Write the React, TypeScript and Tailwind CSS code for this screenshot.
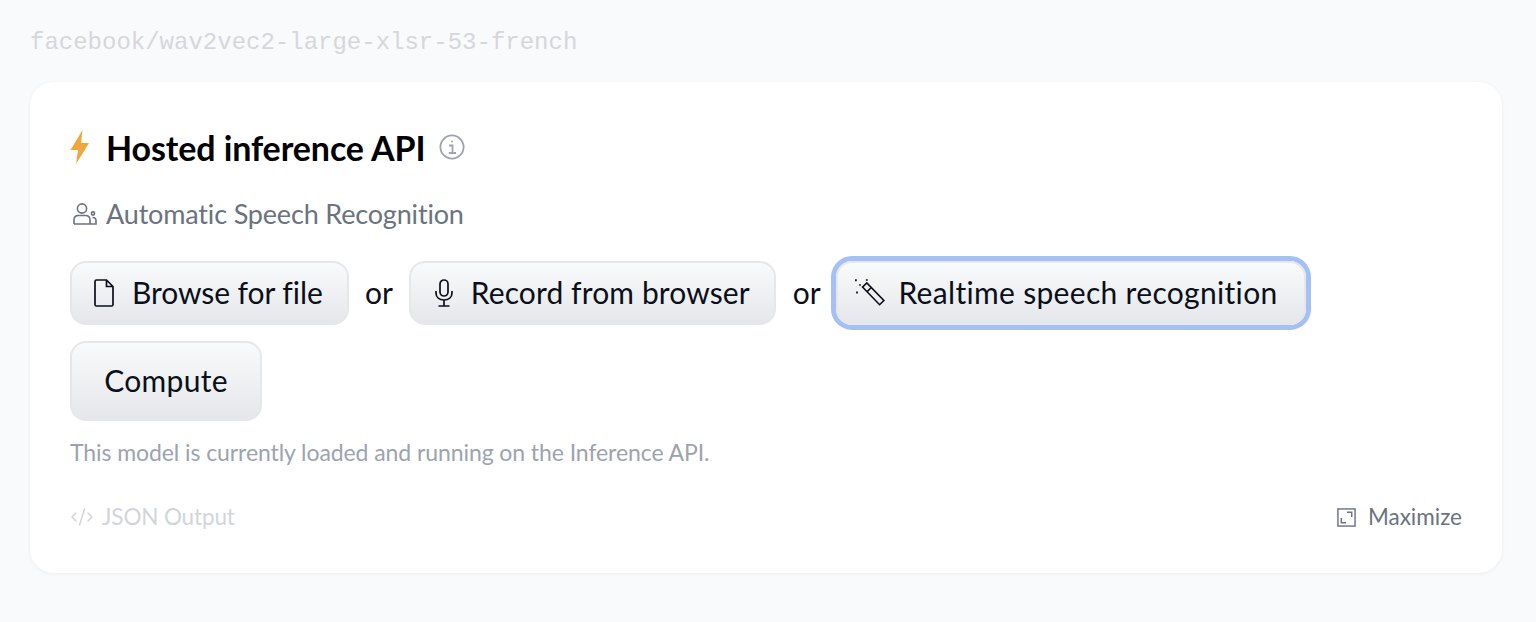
import { Code2 } from "lucide-react";

const buttonClass =
  "flex h-[64px] items-center rounded-[16px] border-2 border-[#e5e7eb] bg-gradient-to-b from-[#f9fafb] to-[#e5e7eb] pb-[2px] text-[30px] text-[#0b0f19]";

const App = () => {
  return (
    <div className="min-h-[622px] bg-[#f9fafb] pl-[30px] pr-[34px] pt-[25px] font-['Lato','Noto_Sans',sans-serif]">
      <h1 className="mb-[22px] h-[35px] font-['Liberation_Mono',monospace] text-[24px] leading-[35px] text-[#d5d7dd]">
        facebook/wav2vec2-large-xlsr-53-french
      </h1>
      <div className="flex h-[491px] flex-col rounded-[24px] bg-white px-[40px] pt-[44px] shadow-[0_1px_4px_rgba(0,0,0,0.06)]">
        <div className="flex h-[42px] items-center">
          <svg className="mr-[16px] h-[34px] w-[20px]" viewBox="0 0 20 34">
            <path d="M12.5 0 L0.5 20 H8 L6 34 L19 13 H11 Z" fill="#f0a63c" />
          </svg>
          <span className="text-[34px] font-bold tracking-[-0.1px] text-black">Hosted inference API</span>
          <svg className="ml-[14px] h-[26px] w-[26px]" viewBox="0 0 26 26" fill="none" stroke="#9ca3af" strokeWidth="1.8">
            <circle cx="13" cy="13" r="11.6" />
            <path d="M10 11.5 H13.5 V19 M9.8 19 H17" />
            <circle cx="13" cy="7.6" r="1" fill="#9ca3af" stroke="none" />
          </svg>
        </div>
        <div className="mt-[25px] flex h-[42px] items-center text-[#6b7280]">
          <svg className="ml-[3px] mr-[9px] h-[24px] w-[24px]" viewBox="0 0 24 24" fill="none" stroke="#6b7280" strokeWidth="1.6">
            <circle cx="9" cy="6.5" r="4.6" />
            <path d="M1 22 V18 C1 15 3 13.5 5.5 13.5 H12.5 C15 13.5 17 15 17 18 V22 H23 V18.5 C23 16.5 21.5 15.5 19.5 15.5 M1 22 H17" />
            <circle cx="20" cy="11.5" r="1.6" />
          </svg>
          <span className="text-[27px] tracking-[-0.17px]">Automatic Speech Recognition</span>
        </div>
        <div className="mt-[26px] flex h-[64px] items-center text-[30px] text-[#0b0f19]">
          <button className={`${buttonClass} w-[279px] pl-[22px] tracking-[-0.07px]`}>
            <svg className="mr-[18px] mt-[2px] h-[28px] w-[20px] shrink-0" viewBox="0 0 20 28" fill="none" stroke="currentColor" strokeWidth="1.7">
              <path d="M2.5 1 H12.5 L19 7.5 V25.5 Q19 27 17.5 27 H2.5 Q1 27 1 25.5 V2.5 Q1 1 2.5 1 Z M12.5 1 V7.5 H19" />
            </svg>
            Browse for file
          </button>
          <span className="mb-[2px] ml-[16px] mr-[16px] tracking-[-0.1px]">or</span>
          <button className={`${buttonClass} w-[367px] pl-[20px] tracking-[0.12px]`}>
            <svg className="mr-[14px] mt-[2px] h-[28px] w-[26px] shrink-0" viewBox="0 0 26 28" fill="none" stroke="currentColor" strokeWidth="1.7">
              <rect x="9" y="1" width="8" height="16" rx="4" />
              <path d="M5 12 V14 C5 18.5 8.5 21 13 21 C17.5 21 21 18.5 21 14 V12 M13 21 V27 M7.5 27 H18.5" />
            </svg>
            Record from browser
          </button>
          <span className="mb-[2px] ml-[17px] mr-[11px] tracking-[-0.1px]">or</span>
          <div className="rounded-[21px] border-[5px] border-[#a5c0f5]">
            <button className={`${buttonClass} w-[470px] pl-[16px] tracking-[0.32px]`}>
              <svg className="mr-[12px] mt-[2px] h-[32px] w-[32px] shrink-0" viewBox="0 0 30 30" fill="none" stroke="currentColor" strokeWidth="1.5">
                <path d="M8 9.5 L12 5.5 L28 22 L24 26 Z M12 14 L16.3 9.8" />
                <path d="M1 3 h1.6 M12 2 v1.6 M2 14.5 h1.6 M5 7.5 h1.2" strokeWidth="1.8" />
              </svg>
              Realtime speech recognition
            </button>
          </div>
        </div>
        <button className={`${buttonClass} mt-[16px] h-[80px] w-[192px] justify-center tracking-[0.3px]`}>Compute</button>
        <p className="mt-[16px] h-[30px] text-[23px] leading-[30px] tracking-[-0.08px] text-[#9ca3af]">
          This model is currently loaded and running on the Inference API.
        </p>
        <div className="mt-[35px] flex h-[30px] items-center justify-between text-[22.5px]">
          <div className="flex items-center text-[#d1d5db]">
            <Code2 size={24} strokeWidth={1.5} className="mr-[8px]" />
            <span className="tracking-[-0.15px]">JSON Output</span>
          </div>
          <div className="flex items-center text-[#6b7280]">
            <svg className="mr-[12px] h-[19px] w-[19px]" viewBox="0 0 20 20" fill="none" stroke="currentColor" strokeWidth="1.5">
              <rect x="1" y="1" width="18" height="18" />
              <path d="M4.5 10.5 V15.5 H9.5 M10.5 4.5 H15.5 V9.5" />
            </svg>
            Maximize
          </div>
        </div>
      </div>
    </div>
  );
};

export default App;
